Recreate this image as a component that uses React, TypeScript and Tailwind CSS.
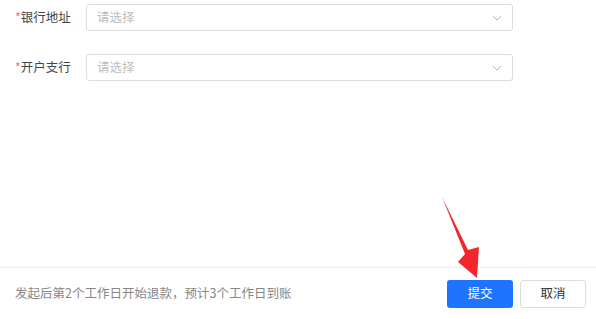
import React from 'react';

const ChevronDown: React.FC = () => (
  <svg width="12" height="12" viewBox="0 0 12 12" fill="none">
    <path d="M2 4.2L6 8L10 4.2" stroke="#b3b3b3" strokeWidth="1" strokeLinecap="round" strokeLinejoin="round" />
  </svg>
);

const SelectRow: React.FC<{ label: string }> = ({ label }) => (
  <div className="flex items-center">
    <label className="w-[71px] shrink-0 text-[12.5px] text-[#444444]">
      <span className="text-[#f56c6c]">*</span>
      {label}
    </label>
    <div className="flex h-[27px] w-[427px] items-center justify-between rounded-[3px] border border-[#dcdcdc] bg-white pl-[10px] pr-[9px]">
      <span className="text-[12.5px] text-[#bdbdbd]">请选择</span>
      <ChevronDown />
    </div>
  </div>
);

const App: React.FC = () => {
  return (
    <div
      className="relative flex h-[319px] w-[596px] flex-col bg-white"
      style={{ fontFamily: '"Noto Sans CJK SC", "Noto Sans", sans-serif' }}
    >
      {/* Form */}
      <div className="flex flex-1 flex-col gap-[23px] px-[15px] pt-[4px]">
        <SelectRow label="银行地址" />
        <SelectRow label="开户支行" />
      </div>

      {/* Footer */}
      <div className="flex h-[52px] items-center justify-between border-t border-[#eeeeee] pl-[15px] pr-[10px]">
        <span className="text-[12.5px] text-[#868686]">发起后第2个工作日开始退款，预计3个工作日到账</span>
        <div className="flex gap-[7px]">
          <button className="h-[28px] w-[66px] rounded-[3px] bg-[#1f74ff] text-[12.5px] text-white">提交</button>
          <button className="h-[28px] w-[66px] rounded-[3px] border border-[#dcdcdc] bg-white text-[12.5px] text-[#333333]">
            取消
          </button>
        </div>
      </div>

      {/* annotation arrow */}
      <svg className="pointer-events-none absolute left-0 top-0" width="596" height="319" viewBox="0 0 596 319">
        <polygon points="442,197 468,250 479,247 477,278 458,262 465,254" fill="#f5262b" />
      </svg>
    </div>
  );
};

export default App;
